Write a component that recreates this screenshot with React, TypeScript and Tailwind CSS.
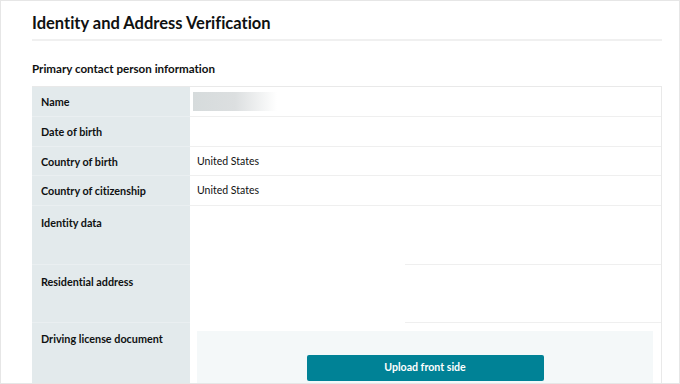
const rows = [
  { label: 'Name', value: '', h: 'h-[30px]', blur: true },
  { label: 'Date of birth', value: '', h: 'h-[30px]' },
  { label: 'Country of birth', value: 'United States', h: 'h-[29px]' },
  { label: 'Country of citizenship', value: 'United States', h: 'h-[30px]' },
];

const tallRows = [
  { label: 'Identity data', h: 'h-[59px]' },
  { label: 'Residential address', h: 'h-[58px]' },
];

export default function App() {
  return (
    <div className="w-[680px] h-[384px] overflow-hidden bg-white border border-[#e6e6e6] font-['Lato',sans-serif] text-[#0f1111] [font-variant-ligatures:none]">
      <div className="pl-[31px] pr-[17px]">
        <h1 className="pt-[11px] text-[16.5px] leading-[22px] font-bold">
          Identity and Address Verification
        </h1>
        <div className="mt-[5px] h-[2px] bg-[#f0f0f0]" />
        <h2 className="mt-[21px] text-[11.6px] leading-[14px] font-bold">
          Primary contact person information
        </h2>

        {/* tabela */}
        <div className="mt-[10px] border-t border-r border-[#e9e9e9]">
          {rows.map((r) => (
            <div key={r.label} className={`grid grid-cols-[158px_1fr] ${r.h}`}>
              <div className="bg-[#e3eaec] border-b border-[#eaeff1] pl-[9px] pt-[8px] text-[10.8px] leading-[13px] font-bold">
                {r.label}
              </div>
              <div className="border-b border-[#efefef] pl-[7px] pt-[8px] text-[10.5px] leading-[13px]">
                {r.blur ? (
                  <div className="-mt-[3px] -ml-[4px] h-[19px] w-[84px] bg-gradient-to-r from-[#d6dbdc] via-[#dcdfe0] to-white" />
                ) : (
                  r.value
                )}
              </div>
            </div>
          ))}

          {tallRows.map((r) => (
            <div key={r.label} className={`grid grid-cols-[158px_1fr] ${r.h}`}>
              <div className="bg-[#e3eaec] border-b border-[#eaeff1] pl-[9px] pt-[10px] text-[10.8px] leading-[13px] font-bold">
                {r.label}
              </div>
              <div className="flex flex-col">
                <div className="flex-1" />
                <div className="ml-[215px] h-[1px] bg-[#efefef]" />
              </div>
            </div>
          ))}

          <div className="grid grid-cols-[158px_1fr] h-[70px]">
            <div className="bg-[#e3eaec] pl-[9px] pt-[9px] text-[10.8px] leading-[13px] font-bold">
              Driving license document
            </div>
            <div className="pl-[7px] pr-[8px] pt-[8px]">
              <div className="h-full bg-[#f4f8f9] pt-[24px] flex justify-center">
                <button className="w-[237px] h-[26px] bg-[#008296] rounded-[2px] text-white text-[10.6px] font-bold">
                  Upload front side
                </button>
              </div>
            </div>
          </div>
        </div>
      </div>
    </div>
  );
}
